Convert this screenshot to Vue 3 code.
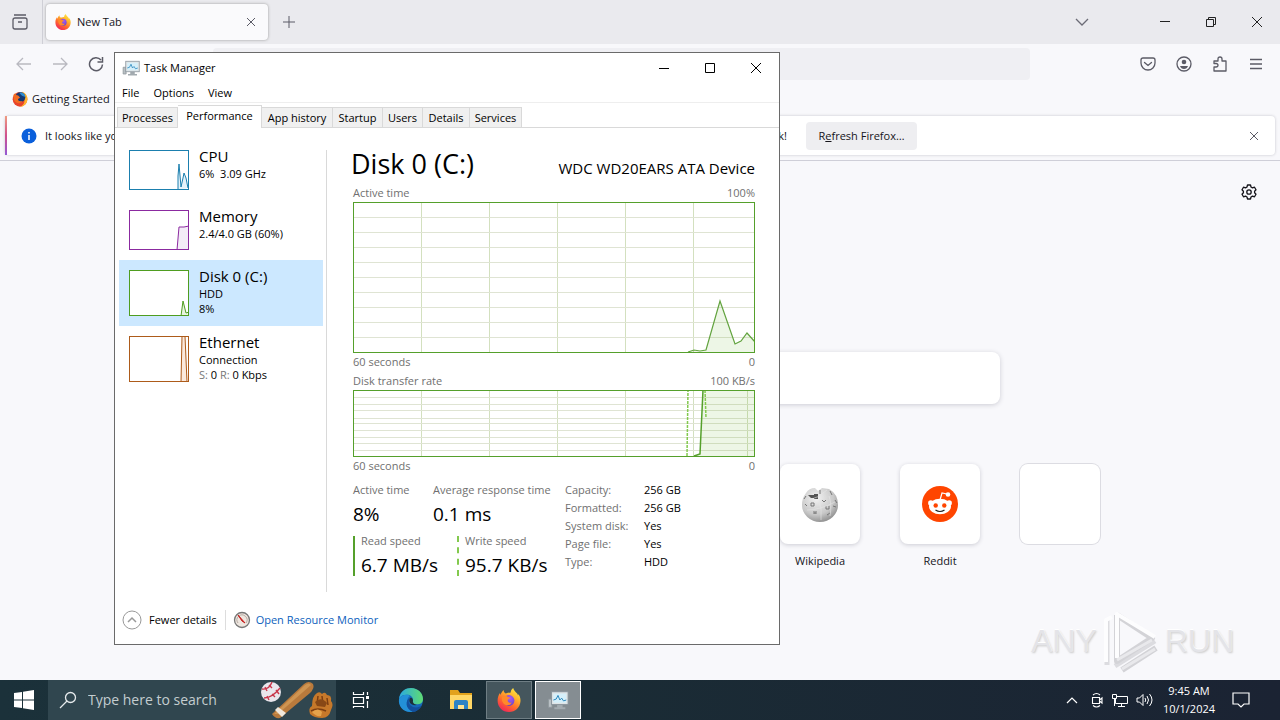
<script setup>
const tabs = ['Processes', 'Performance', 'App history', 'Startup', 'Users', 'Details', 'Services']

const resources = [
  { name: 'CPU', lines: ['6%  3.09 GHz'], color: '#1b7fae', fill: '#e4f2fa', h: 40, path: 'M49 40V26L50 14L52 37L54 28L55 23L57 28L59 38' },
  { name: 'Memory', lines: ['2.4/4.0 GB (60%)'], color: '#8b2aa0', fill: '#f3ecf7', h: 40, path: 'M48 40L50 17L55 17L60 16V40' },
  { name: 'Disk 0 (C:)', lines: ['HDD', '8%'], color: '#4f9d20', fill: '#e8f4df', h: 46, path: 'M52 46L54 31L57 43L60 42V46' },
  { name: 'Ethernet', lines: ['Connection'], net: true, color: '#ad5b1a', fill: '#fbe9dc', h: 46, path: 'M52 46L53 0H56L58 46' }
]

const details = [
  ['Capacity:', '256 GB'],
  ['Formatted:', '256 GB'],
  ['System disk:', 'Yes'],
  ['Page file:', 'Yes'],
  ['Type:', 'HDD']
]

const columns = [68, 136, 204, 272, 340, 394]
const rowsActive = [15, 30, 45, 60, 75, 90, 105, 120, 135]
const rowsTransfer = [7, 14, 20, 28, 33, 40, 47, 53, 60]
</script>

<template>
  <div class="desktop">
    <svg class="defs" aria-hidden="true">
      <defs>
        <linearGradient id="flame" x1="0.85" y1="0" x2="0.25" y2="1">
          <stop offset="0" stop-color="#fff04a" />
          <stop offset="0.35" stop-color="#ffb22b" />
          <stop offset="0.65" stop-color="#ff6a2c" />
          <stop offset="1" stop-color="#f0225c" />
        </linearGradient>
        <radialGradient id="globe" cx="0.6" cy="0.3" r="0.8">
          <stop offset="0" stop-color="#a85bf5" />
          <stop offset="1" stop-color="#5b3fc4" />
        </radialGradient>
        <linearGradient id="edgeTop" x1="0" y1="0.3" x2="1" y2="0.3">
          <stop offset="0" stop-color="#2aa9e0" />
          <stop offset="1" stop-color="#5fdc72" />
        </linearGradient>
        <radialGradient id="wiki" cx="0.4" cy="0.3" r="0.8">
          <stop offset="0" stop-color="#f2f2f2" />
          <stop offset="0.6" stop-color="#c8c8c8" />
          <stop offset="1" stop-color="#7f7f7f" />
        </radialGradient>
        <symbol id="firefox" viewBox="0 0 24 24">
          <path fill="url(#flame)" d="M12 24C5.500 24 .6 19 .6 12.700C.6 9.500 1.500 7 3 5L3.400 7C4.200 5 5.300 3.200 6.700 2C6.600 3.700 7.300 4.800 8.600 5.400C10.300 5 12.500 4.700 13.700 4.500C13.700 2.800 14.600 1.200 16.200 0C16.700 2.300 18.300 3.500 19.600 5C20.400 5.700 20.800 6.500 21 7.400C21.300 7 21.400 6.400 21.300 5.900C22.900 8 23.600 10.300 23.500 13C23.200 19.400 18.300 24 12 24Z" />
          <circle cx="12" cy="12.500" r="5.400" fill="url(#globe)" />
          <path fill="#ff8a2a" d="M5 9C7 7.300 9.500 7.500 11 9L13.200 9.600C12.800 10.900 10.900 11 10.700 12.300C10.500 14 12.200 15.300 14.800 14.500C13.500 17.500 9.500 18.300 7 16C5 14 4.500 11.500 5 9Z" />
        </symbol>
        <symbol id="firefoxBlue" viewBox="0 0 24 24">
          <circle cx="12" cy="12.500" r="11" fill="#e8442b" />
          <path fill="#ffb52b" d="M15 1C21 3 24 8 23 14C22 20 17 24 12 24C18 21 20 16 18 10Z" />
          <circle cx="12.500" cy="9.500" r="7.500" fill="#163a72" />
          <path fill="#2f8ccf" d="M11 3C15 1 20 4 20 9L15 7Z" />
          <path fill="#f26b22" d="M2 6L5 3L6 6C9 6 11 8 12 10L9 12C9 15 12 16 16 15C13 20 5 19 3 13Z" />
        </symbol>
        <symbol id="monitor" viewBox="0 0 24 24">
          <path d="M1.500 11H5.500V20H1.500Z" fill="#b9c0c4" stroke="#8d969b" />
          <path d="M11 17H17V20H20V22H8V20H11Z" fill="#a3abb0" />
          <rect x="5" y="3" width="18" height="14" fill="#dfe4e6" stroke="#87929a" />
          <rect x="7" y="5" width="14" height="10" fill="#d5effa" />
          <path d="M7 12L10 11L12 7L14 12L16 10L18 13L21 12" fill="none" stroke="#1d7fb8" />
        </symbol>
      </defs>
    </svg>

    <main class="browser">
      <header class="tabstrip">
        <button class="view" aria-label="Recent tabs">
          <svg width="18" height="18" viewBox="0 0 18 18" fill="none" stroke="#5b5b66" stroke-width="1.300"><path d="M3 2H15M2 7V14Q2 16 4 16H14Q16 16 16 14V7Q16 5 14 5H4Q2 5 2 7ZM7 9H11" /></svg>
        </button>
        <div class="tab">
          <svg width="16" height="16"><use href="#firefox" /></svg>
          <span>New Tab</span>
          <button aria-label="Close tab"><svg width="10" height="10" viewBox="0 0 10 10" stroke="#5b5b66"><path d="M1 1L9 9M9 1L1 9" /></svg></button>
        </div>
        <button class="plus" aria-label="New tab"><svg width="12" height="12" viewBox="0 0 12 12" stroke="#5b5b66" stroke-width="1"><path d="M6 0V12M0 6H12" /></svg></button>
        <div class="caption">
          <button aria-label="List tabs"><svg width="14" height="10" viewBox="0 0 14 10" fill="none" stroke="#6b6b76" stroke-width="1.300"><path d="M1 2L7 8L13 2" /></svg></button>
          <button class="min" aria-label="Minimize"><svg width="12" height="12" viewBox="0 0 12 12" stroke="#222"><path d="M1 5.500H11" /></svg></button>
          <button aria-label="Restore"><svg width="12" height="12" viewBox="0 0 12 12" fill="none" stroke="#222"><path d="M1.500 3.500H8.500V10.500H1.500ZM3.500 3V1.500H10.500V8.500H9" /></svg></button>
          <button aria-label="Close"><svg width="12" height="12" viewBox="0 0 12 12" stroke="#222"><path d="M1 1L11 11M11 1L1 11" /></svg></button>
        </div>
      </header>

      <nav class="navbar">
        <button aria-label="Back"><svg width="16" height="16" viewBox="0 0 16 16" fill="none" stroke="#b9b9c0" stroke-width="1.300"><path d="M15 8H1M7 2L1 8L7 14" /></svg></button>
        <button aria-label="Forward"><svg width="16" height="16" viewBox="0 0 16 16" fill="none" stroke="#b9b9c0" stroke-width="1.300"><path d="M1 8H15M9 2L15 8L9 14" /></svg></button>
        <button aria-label="Reload"><svg width="16" height="16" viewBox="0 0 16 16" fill="none" stroke="#5b5b66" stroke-width="1.500"><path d="M13 4A6.500 6.500 0 1 0 14.500 8.500M14.500 1V6H9.500" /></svg></button>
        <input class="url" type="text" aria-label="Address" />
        <div class="tools">
          <button aria-label="Save to Pocket"><svg width="16" height="16" viewBox="0 0 16 16" fill="none" stroke="#5b5b66" stroke-width="1.300" stroke-linecap="round"><path d="M3 2H13Q15 2 15 4V7A7 7 0 0 1 1 7V4Q1 2 3 2ZM4.500 6.500L8 9.500L11.500 6.500" /></svg></button>
          <button aria-label="Account"><svg width="16" height="16" viewBox="0 0 16 16" fill="none" stroke="#5b5b66" stroke-width="1.300"><circle cx="8" cy="8" r="7" /><circle cx="8" cy="6" r="2.300" fill="#5b5b66" stroke="none" /><path d="M4 10H12Q11 13 8 13Q5 13 4 10Z" fill="#5b5b66" stroke="none" /></svg></button>
          <button aria-label="Extensions"><svg width="16" height="16" viewBox="0 0 16 16" fill="none" stroke="#5b5b66" stroke-width="1.300" stroke-linejoin="round"><path d="M2 15V11H4Q6 11 6 9.200Q6 7.500 4 7.500H2V5H6V3Q6 1 8 1Q10 1 10 3V5H14V15Z" /></svg></button>
          <button aria-label="Menu"><svg width="14" height="12" viewBox="0 0 14 12" stroke="#5b5b66" stroke-width="1.300"><path d="M1 1.500H13M1 6H13M1 10.500H13" /></svg></button>
        </div>
      </nav>

      <div class="bookmarks">
        <svg width="16" height="16"><use href="#firefoxBlue" /></svg>
        <a href="#">Getting Started</a>
      </div>

      <div class="notice-wrap">
        <div class="notice">
          <svg width="16" height="16" viewBox="0 0 16 16"><circle cx="8" cy="8" r="7.500" fill="#0a5fdb" /><path d="M8 7V12M8 4V5.500" stroke="#fff" stroke-width="1.500" /></svg>
          <p><span>It looks like you haven’t started Firefox in a while.</span><span>And by the way, welcome back!</span></p>
          <button class="refresh">R<u>e</u>fresh Firefox…</button>
          <button class="dismiss" aria-label="Dismiss"><svg width="10" height="10" viewBox="0 0 10 10" stroke="#5b5b66"><path d="M1 1L9 9M9 1L1 9" /></svg></button>
        </div>
      </div>

      <section class="page">
        <button class="gear" aria-label="Customize">
          <svg width="16" height="16" viewBox="0 0 16 16" fill="none" stroke="#15141a" stroke-width="1.300" stroke-linejoin="round"><path d="M6.500 1H9.500L10 3L11.500 3.900L13.500 3.200L15 5.800L13.600 7.200V8.800L15 10.200L13.500 12.800L11.500 12.100L10 13L9.500 15H6.500L6 13L4.500 12.100L2.500 12.800L1 10.200L2.400 8.800V7.200L1 5.800L2.500 3.200L4.500 3.900L6 3Z" /><circle cx="8" cy="8" r="2.200" /></svg>
        </button>
        <input class="search-web" type="text" aria-label="Search the web" />
        <div class="shortcuts">
          <a href="#" class="shortcut">
            <span class="tile">
              <svg width="36" height="36" viewBox="0 0 36 36">
                <path d="M4 7Q7 2 13 2L16 5L20 2L27 3Q36 8 36 19A18 17 0 0 1 0 19Q0 12 4 7Z" fill="url(#wiki)" />
                <path d="M6 9H14L15 12H9ZM12 8H16V13H12Z" fill="#555" />
                <path d="M9 17H12V20H9ZM20 14L22 16L24 14M24 20V23H27V20M12 25V28M14 25V28M12 27H14M28 5L30 9M33 14L35 17M3 18L5 20M25 29L28 27M18 4V8M31 20L34 21M2 13L4 10" fill="none" stroke="#777" />
                <path d="M7 14Q17 12 25 4M5 24Q18 24 33 16M17 14Q20 22 19 34M27 10Q30 18 28 30" stroke="#e5e5e5" stroke-width="0.600" fill="none" />
              </svg>
            </span>
            <span>Wikipedia</span>
          </a>
          <a href="#" class="shortcut">
            <span class="tile">
              <svg width="36" height="36" viewBox="0 0 36 36">
                <circle cx="18" cy="18" r="18" fill="#ff4500" />
                <path d="M18 14L20 7L25 8" stroke="#fff" stroke-width="1.200" fill="none" />
                <circle cx="26" cy="8.500" r="2.300" fill="#fff" />
                <circle cx="8.800" cy="17" r="2.700" fill="#fff" /><circle cx="27.200" cy="17" r="2.700" fill="#fff" />
                <ellipse cx="18" cy="20.500" rx="11" ry="7.800" fill="#fff" />
                <circle cx="13.700" cy="19.500" r="2.200" fill="#ff4500" /><circle cx="22.300" cy="19.500" r="2.200" fill="#ff4500" />
                <path d="M13.500 24Q18 27 22.500 24" stroke="#222" stroke-width="1.200" fill="none" />
              </svg>
            </span>
            <span>Reddit</span>
          </a>
          <a href="#" class="shortcut" aria-label="Add shortcut"><span class="tile empty"></span></a>
        </div>
      </section>
    </main>

    <div class="watermark">
      <span>ANY</span>
      <svg width="58" height="66" viewBox="0 0 58 66" fill="none" stroke-width="5" stroke-linejoin="round">
        <path stroke="#dcdce0" d="M5 12V57M13 58L53 33" />
        <path stroke="#d3d3d7" d="M15 7V53L50 30L15 7M20 62L54 40" stroke-width="6" />
        <path stroke="#fdfdfe" stroke-width="4" d="M4 54V12L10 9M15 50V6L53 29" />
        <path stroke="#e9e9ec" stroke-width="3" d="M15 52L50 32M20 61L53 41" />
      </svg>
      <span>RUN</span>
    </div>

    <section class="window">
      <header class="titlebar">
        <svg width="18" height="18"><use href="#monitor" /></svg>
        <h1>Task Manager</h1>
        <button aria-label="Minimize"><svg width="12" height="12" viewBox="0 0 12 12" stroke="#000"><path d="M1 6.500H11" /></svg></button>
        <button aria-label="Maximize"><svg width="12" height="12" viewBox="0 0 12 12" fill="none" stroke="#000"><path d="M1.500 1.500H10.500V10.500H1.500Z" /></svg></button>
        <button aria-label="Close"><svg width="12" height="12" viewBox="0 0 12 12" stroke="#000"><path d="M1 1L11 11M11 1L1 11" /></svg></button>
      </header>
      <div class="menu"><button>File</button><button>Options</button><button>View</button></div>
      <div class="tabs"><button v-for="t in tabs" :key="t" :class="{ active: t === 'Performance' }">{{ t }}</button></div>

      <div class="pane">
        <aside class="resources">
          <button v-for="r in resources" :key="r.name" class="resource" :class="{ selected: r.lines.length > 1 }">
            <svg width="60" :height="r.h" :viewBox="`0 0 60 ${r.h}`">
              <rect x="0.500" y="0.500" width="59" :height="r.h - 1" fill="#fff" />
              <path :d="r.path" :fill="r.fill" :stroke="r.color" />
              <rect x="0.500" y="0.500" width="59" :height="r.h - 1" fill="none" :stroke="r.color" />
            </svg>
            <span class="info">
              <strong>{{ r.name }}</strong>
              <span v-for="l in r.lines" :key="l">{{ l }}</span>
              <span v-if="r.net"><i>S:</i> 0 <i>R:</i> 0 Kbps</span>
            </span>
          </button>
        </aside>

        <div class="detail">
          <div class="heading"><h2>Disk 0 (C:)</h2><span>WDC WD20EARS ATA Device</span></div>
          <div class="axis"><span>Active time</span><span>100%</span></div>
          <svg class="chart tall" viewBox="0 0 402 151" preserveAspectRatio="none">
            <path v-for="x in columns.slice(0, 5)" :key="'c' + x" :d="`M${x}.500 0V151`" stroke="#d3e0bf" />
            <path v-for="y in rowsActive" :key="'r' + y" :d="`M0 ${y}.500H402`" stroke="#dfe4d3" />
            <path d="M335 150L341 148L347 149L353 148L367 99L382 142L388 139L394 131L402 140V151H335Z" fill="#4da60c" fill-opacity="0.100" />
            <path d="M335 150L341 148L347 149L353 148L367 99L382 142L388 139L394 131L402 140" fill="none" stroke="#62a33e" stroke-width="1.200" />
            <rect x="0.500" y="0.500" width="401" height="150" fill="none" stroke="#55a02b" />
          </svg>
          <div class="axis below"><span>60 seconds</span><span>0</span></div>
          <div class="axis"><span>Disk transfer rate</span><span>100 KB/s</span></div>
          <svg class="chart short" viewBox="0 0 402 67" preserveAspectRatio="none">
            <path v-for="x in columns" :key="'c' + x" :d="`M${x}.500 0V67`" stroke="#d3e0bf" />
            <path v-for="y in rowsTransfer" :key="'r' + y" :d="`M0 ${y}.500H402`" stroke="#dfe4d3" />
            <path d="M341 66L347 64L350 0H402V67H341Z" fill="#4da60c" fill-opacity="0.100" />
            <path d="M341 66L347 64L350 0" fill="none" stroke="#55a02b" stroke-width="1.500" />
            <path d="M334 66L335 0M352 0L353 28" fill="none" stroke="#83c94e" stroke-width="1.500" stroke-dasharray="3 1" />
            <rect x="0.500" y="0.500" width="401" height="66" fill="none" stroke="#55a02b" />
          </svg>
          <div class="axis below"><span>60 seconds</span><span>0</span></div>

          <div class="stats">
            <div class="figures">
              <div class="pair first">
                <div><span>Active time</span><b>8%</b></div>
                <div><span>Average response time</span><b>0.1 ms</b></div>
              </div>
              <div class="pair second">
                <div class="read"><span>Read speed</span><b>6.7 MB/s</b></div>
                <div class="write"><span>Write speed</span><b>95.7 KB/s</b></div>
              </div>
            </div>
            <dl><template v-for="d in details" :key="d[0]"><dt>{{ d[0] }}</dt><dd>{{ d[1] }}</dd></template></dl>
          </div>
        </div>
      </div>

      <footer class="foot">
        <button class="fewer">
          <svg width="20" height="20" viewBox="0 0 20 20" fill="none" stroke="#999"><circle cx="10" cy="10" r="9" /><path d="M6 12L10 8L14 12" stroke-width="1.500" /></svg>
          Fewer details
        </button>
        <a href="#">
          <svg width="18" height="18" viewBox="0 0 18 18"><circle cx="9" cy="9" r="7.500" fill="#eee6df" stroke="#777" stroke-width="1.300" /><path d="M5 12A5 5 0 1 1 13 12" stroke="#b5a9a2" fill="none" /><path d="M5 4L12 12L9 10Z" fill="#c82020" stroke="#c82020" /></svg>
          Open Resource Monitor
        </a>
      </footer>
    </section>

    <footer class="taskbar">
      <button class="start" aria-label="Start"><svg width="20" height="20" viewBox="0 0 20 20" fill="#fff"><path d="M0 3L8 2V9.500H0ZM9 1.800L20 0V9.500H9ZM0 10.500H8V18L0 17ZM9 10.500H20V20L9 18.200Z" /></svg></button>
      <div class="search">
        <svg width="18" height="18" viewBox="0 0 18 18" fill="none" stroke="#e6eaec" stroke-width="1.300"><circle cx="11.500" cy="6.500" r="5" /><path d="M8 10L1 17" /></svg>
        <input type="text" placeholder="Type here to search" aria-label="Search" />
        <svg class="sport" width="76" height="40" viewBox="0 0 76 40">
          <circle cx="11" cy="12" r="10" fill="#e9e6ec" />
          <path d="M2 9Q9 10 12 2M4 18Q12 18 20 8M5 7L7 11M9 5L12 8M7 16L9 20M12 14L15 17M16 10L19 14" fill="none" stroke="#c8364a" stroke-width="1.400" />
          <path d="M12 34L44 4Q49 0 53 4Q55 8 50 13L20 38Q15 39 12 34Z" fill="#b97a3c" />
          <path d="M14 34L45 5Q49 2 51 5L18 34Z" fill="#cf9552" />
          <path d="M18 27L26 33L22 37L15 30Z" fill="#f1e8dc" />
          <path d="M50 34Q48 28 52 26Q52 16 57 13Q60 11 62 14Q65 11 67 15Q72 15 71 21Q74 24 71 30Q69 38 62 38Q54 38 50 34Z" fill="#c6782a" />
          <path d="M58 16L57 24M62 16L63 24M67 18L68 25M51 31Q58 27 66 31" fill="none" stroke="#7c3e12" stroke-width="1.500" />
          <path d="M55 22Q61 16 67 23L65 27L57 26Z" fill="#884816" />
          <path d="M52 32Q58 27 62 32L61 36Q56 37 52 32Z" fill="#e4a24b" />
        </svg>
      </div>
      <button class="app" aria-label="Task view"><svg width="18" height="18" viewBox="0 0 18 18" fill="none" stroke="#fff" stroke-width="1.200"><path d="M1.500 1V3.500H11.500V1M1.500 6.500H11.500V12.500H1.500ZM1.500 17V15.500H11.500V17M15.500 1V4M15.500 10V17" /><path d="M14 5H17V8H14Z" fill="#fff" stroke="none" /></svg></button>
      <button class="app" aria-label="Edge">
        <svg width="26" height="26" viewBox="0 0 26 26">
          <circle cx="13" cy="13" r="12" fill="#1668b8" />
          <path d="M1 12C2 4 8 1 13 1C20 1 25 6 25 12C25 17 20 18 16 17C13 16 15 15 15 13C15 9 11 7 7 8C4 8 2 10 1 12Z" fill="url(#edgeTop)" />
          <path d="M1 12C4 7 10 7 12 9C8 11 7 20 15 25C5 26 0 19 1 12Z" fill="#2390d8" />
          <path d="M12 11C10 13 10 18 15 20C19 21 22 20 24 18C22 22 18 25 15 25C7 22 7 13 12 11Z" fill="#134f9c" />
          <path d="M12 11C10 15 13 19 19 18Q14 17 15 13Q14 10 12 11Z" fill="#1d303a" />
        </svg>
      </button>
      <button class="app" aria-label="File Explorer">
        <svg width="24" height="22" viewBox="0 0 24 22"><path d="M1 1H9L11 4H23V20H1Z" fill="#e2a21c" /><path d="M1 6H23V20H1Z" fill="#ffd766" /><path d="M5 20V13Q5 11 7 11H17Q19 11 19 13V20H15V16H9V20Z" fill="#2d83c4" /><path d="M9 16H15V20H9Z" fill="#ffe391" /></svg>
      </button>
      <button class="app open" aria-label="Firefox"><svg width="24" height="24"><use href="#firefox" /></svg></button>
      <button class="app open current" aria-label="Task Manager"><svg width="22" height="22"><use href="#monitor" /></svg></button>
      <div class="tray">
        <svg class="chevron" width="12" height="8" viewBox="0 0 12 8" fill="none" stroke="#fff" stroke-width="1.200"><path d="M1 7L6 2L11 7" /></svg>
        <svg width="14" height="16" viewBox="0 0 14 16" fill="none" stroke="#fff" stroke-width="1.100"><path d="M2.500 5.500H9.500V11.500H2.500ZM9.500 8L12 6V11L9.500 9M3 3Q6.500 0 10 3M3 13.500Q6.500 16.500 10 13.500" /></svg>
        <svg width="16" height="14" viewBox="0 0 16 14" fill="none" stroke="#fff"><path d="M5 3.500H15.500V10.500H3.500V6M9.500 10.500V13M6 13.500H13M.5 1.500H4.500V5.500H.5ZM2.500 5.500V13" /></svg>
        <svg width="18" height="14" viewBox="0 0 18 14" fill="none" stroke="#fff"><path d="M1 5H3.500L7 1.500V12.500L3.500 9H1ZM9 5Q10.500 7 9 9M11 3Q14 7 11 11M13.500 1Q18.500 7 13.500 13" /></svg>
        <time>9:45 AM<br />10/1/2024</time>
        <svg class="bubble" width="18" height="16" viewBox="0 0 18 16" fill="none" stroke="#fff" stroke-width="1.200"><path d="M1 1H17V12H12L9 15L6 12H1Z" /></svg>
      </div>
    </footer>
  </div>
</template>

<style>
body { margin: 0; }
</style>

<style scoped>
.desktop { position: relative; min-height: 100vh; display: flex; flex-direction: column; overflow: hidden; background: #f8f8fb; color: #15141a; font: 11px/16px "Open Sans", "Noto Sans", sans-serif; }
.desktop * { box-sizing: border-box; }
.defs { position: absolute; width: 0; height: 0; }
svg { display: block; flex: none; }
button { display: flex; align-items: center; justify-content: center; padding: 0; border: 0; background: none; color: inherit; font: inherit; white-space: nowrap; }
input { min-width: 0; border: 0; padding: 0; background: none; font: inherit; color: inherit; }
a { color: inherit; text-decoration: none; }

.browser { flex: 1; display: flex; flex-direction: column; }
.tabstrip { display: flex; align-items: center; height: 44px; background: #eaeaee; }
.view { width: 43px; height: 44px; padding-right: 3px; border-right: 1px solid #cfcfd6; }
.tab { display: flex; align-items: center; gap: 6px; width: 222px; height: 36px; margin-left: 3px; padding: 0 10px 0 9px; border-radius: 4px; background: #fafafc; box-shadow: 0 0 3px #999; }
.tab span { flex: 1; }
.tab button { width: 14px; height: 20px; }
.plus { width: 42px; height: 40px; }
.caption { display: flex; margin-left: auto; }
.caption button { width: 46px; height: 44px; }
.caption .min { margin-left: 37px; }
.navbar { display: flex; align-items: center; height: 40px; padding: 0 6px; }
.navbar button { width: 36px; height: 36px; }
.url { flex: 1; height: 32px; margin: 0 100px 0 99px; border-radius: 4px; background: #efeff3; }
.tools { display: flex; }
.bookmarks { display: flex; align-items: center; gap: 4px; height: 30px; padding: 0 12px; }
.notice-wrap { padding: 2px 5px 5px; border-bottom: 1px solid #cfcfd8; }
.notice { display: flex; align-items: center; height: 39px; padding: 0 14px; border-radius: 4px; border-left: 2px solid #b45ccb; border-image: linear-gradient(#f0a080, #d0508c, #9059d8) 1; background: #fff; box-shadow: 0 0 3px #c4c4cc; }
.notice p { display: flex; justify-content: space-between; width: 742px; margin: 0 19px 0 8px; }
.refresh { width: 111px; height: 28px; border-radius: 4px; background: #eeeef1; }
.dismiss { width: 14px; height: 28px; margin-left: auto; }
.page { display: flex; flex-direction: column; align-items: center; }
.gear { align-self: flex-end; width: 32px; height: 32px; margin: 15px 15px 0 0; }
.search-web { width: 720px; height: 52px; margin-top: 144px; border-radius: 8px; background: #fff; box-shadow: 0 1px 5px #ccccd4; }
.shortcuts { display: flex; justify-content: flex-end; gap: 40px; width: 920px; margin-top: 60px; }
.shortcut { display: flex; flex-direction: column; align-items: center; gap: 9px; width: 80px; }
.tile { display: flex; align-items: center; justify-content: center; width: 80px; height: 80px; border-radius: 8px; background: #fff; box-shadow: 0 1px 4px #ccccd4; }
.empty { box-shadow: 0 0 0 1px #dcdce2; }

.watermark { position: absolute; right: 46px; bottom: 46px; display: flex; align-items: center; gap: 5px; color: #e4e4e8; font: 32px/44px "Liberation Sans", sans-serif; text-shadow: 0 -1px #fff, 1px 1px 2px #ccc; }

.window { position: absolute; left: 114px; top: 52px; width: 666px; display: flex; flex-direction: column; border: 1px solid #6a6a6a; background: #fff; color: #000; }
.titlebar { display: flex; align-items: center; height: 29px; padding-left: 7px; }
.titlebar h1 { flex: 1; margin: 0 0 0 4px; font-size: 11px; font-weight: 400; }
.titlebar button { width: 46px; height: 29px; }
.menu { display: flex; gap: 14px; height: 21px; padding: 2px 7px 0; border-bottom: 1px solid #eee; }
.tabs { display: grid; grid-template-columns: 61px 84px 71px 50px 40px 47px 52px; align-items: end; height: 25px; padding-left: 2px; border-bottom: 1px solid #d9d9d9; }
.tabs button { height: 20px; border: 1px solid #d9d9d9; border-left: 0; border-bottom: 0; background: #f0f0f0; }
.tabs button:first-child { border-left: 1px solid #d9d9d9; }
.tabs .active { height: 23px; margin-bottom: -1px; padding-bottom: 2px; background: #fff; }
.pane { display: flex; height: 467px; padding: 12px 24px 0 4px; }
.resources { width: 204px; }
.resource { display: flex; align-items: flex-start; justify-content: flex-start; gap: 10px; width: 100%; height: 60px; padding: 10px; text-align: left; }
.resource:nth-child(n + 3) { height: 66px; }
.selected { background: #cce8ff; }
.info { display: flex; flex-direction: column; line-height: 15px; margin-top: -3px; white-space: pre; }
.info strong { font-size: 15px; line-height: 19px; font-weight: 400; }
.info i { color: #777; font-style: normal; }
.detail { flex: 1; height: 442px; margin: 10px 0 0 3px; padding-left: 26px; border-left: 1px solid #d9d9d9; }
.heading { display: flex; align-items: baseline; justify-content: space-between; height: 35px; font-size: 15px; line-height: 28px; }
.heading h2 { margin: 0 0 0 -2px; font-size: 27px; font-weight: 400; line-height: 28px; }
.axis { display: flex; justify-content: space-between; height: 17px; line-height: 16px; color: #707070; }
.below { height: 19px; line-height: 18px; }
.below + .axis { height: 18px; line-height: 18px; }
.chart { width: 100%; }
.tall { height: 151px; }
.short { height: 67px; }
.stats { display: flex; align-items: flex-start; margin-top: 5px; }
.figures { width: 212px; }
.figures span { display: block; color: #707070; line-height: 18px; white-space: nowrap; }
.figures b { display: block; font-size: 19px; font-weight: 400; line-height: 30px; white-space: nowrap; }
.pair { display: grid; }
.first { grid-template-columns: 80px 1fr; }
.second { grid-template-columns: 104px 1fr; margin-top: 7px; }
.second > div { height: 40px; padding-left: 6px; border-left: 2px solid #55a02b; }
.second span { margin-top: -4px; }
.second .write { border-left: 2px dashed #83c94e; }
dl { display: grid; grid-template-columns: 79px 1fr; margin: 0; line-height: 18px; }
dt { color: #707070; }
dd { margin: 0; }
.foot { display: flex; align-items: center; height: 49px; padding-left: 7px; }
.fewer { gap: 7px; padding-right: 8px; border-right: 1px solid #ddd; }
.foot a { display: flex; align-items: center; gap: 5px; margin-left: 7px; color: #0d5fbd; }

.taskbar { display: flex; height: 40px; background: linear-gradient(90deg, #1b313a, #1a2c35 45%, #1b2333); color: #fff; }
.start { width: 48px; }
.search { display: flex; align-items: center; width: 288px; padding: 0 0 0 11px; background: #30464f; }
.search input { flex: 1; margin-left: 11px; color: #c4cdd0; font-size: 14px; }
.search input::placeholder { color: #c4cdd0; opacity: 1; }
.app { width: 50px; }
.app.open { width: 46px; height: 38px; margin-top: 1px; border: 1px solid #6f7e84; background: #45565d; }
.app.current { margin-left: 3px; border-color: #fff; background: #858d92; }
.tray { display: flex; align-items: center; gap: 8px; margin-left: auto; padding-right: 30px; }
.chevron { margin-right: 4px; }
.tray time { width: 54px; text-align: center; line-height: 18px; }
.bubble { margin-left: 8px; }
</style>
